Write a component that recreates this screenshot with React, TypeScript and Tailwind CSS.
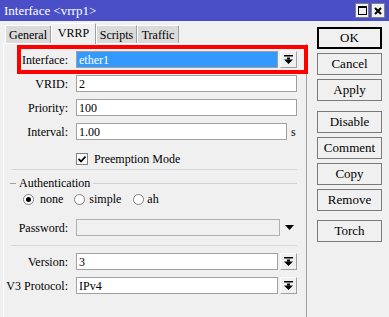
import React from "react";

const DropIcon = () => (
  <svg width="9" height="9" viewBox="0 0 9 9">
    <rect x="0" y="0" width="9" height="1.5" fill="#000" />
    <rect x="3" y="2.5" width="3" height="2" fill="#000" />
    <polygon points="0,4.5 9,4.5 4.5,9" fill="#000" />
  </svg>
);

const DropBtn = () => (
  <div className="w-[17px] h-[17px] ml-[2px] flex items-center justify-center border border-t-white border-l-white border-r-[#a0a0a0] border-b-[#a0a0a0] bg-[#f0f0f0] shrink-0">
    <DropIcon />
  </div>
);

const Field = ({ value, selected, className = "" }: { value: string; selected?: boolean; className?: string }) => (
  <div
    className={
      "h-[17px] border border-[#a0a0a0] flex items-center pl-[2px] text-[12px] leading-none " +
      (selected ? "bg-[#3399ff] text-white " : "bg-white text-black ") +
      className
    }
  >
    {value}
  </div>
);

const Label = ({ children }: { children: React.ReactNode }) => (
  <div className="w-[65px] text-right text-[12px] leading-none pr-[1px] shrink-0 whitespace-nowrap">{children}</div>
);

const Radio = ({ checked }: { checked?: boolean }) => (
  <div className="w-[11px] h-[11px] rounded-full border border-[#808080] bg-white flex items-center justify-center shrink-0">
    {checked && <div className="w-[5px] h-[5px] rounded-full bg-black" />}
  </div>
);

const Btn = ({ label, def, className = "" }: { label: string; def?: boolean; className?: string }) => (
  <div
    className={
      "w-[65px] h-[22px] flex items-center justify-center text-[13px] bg-[#f0f0f0] " +
      (def ? "border-2 border-black " : "border border-[#7a7a7a] ") +
      className
    }
  >
    {label}
  </div>
);

export default function App() {
  return (
    <div
      className="relative w-[389px] h-[317px] bg-[#f0f0f0] overflow-hidden text-black font-serif"
      style={{ fontFamily: "'Liberation Serif', 'Times New Roman', Times, serif" }}
    >
      {/* title bar */}
      <div className="h-[21px] bg-[#4b4fc7] flex items-center pl-[4px] pr-[4px]">
        <div className="text-white text-[13px] leading-none flex-1">Interface &lt;vrrp1&gt;</div>
        <div className="flex gap-[2px]">
          <div className="w-[14px] h-[15px] bg-[#f0f0f0] border border-[#808080] flex items-center justify-center">
            <div className="w-[9px] h-[9px] border border-black border-t-2" />
          </div>
          <div className="w-[14px] h-[15px] bg-[#f0f0f0] border border-[#808080] flex items-center justify-center">
            <svg width="8" height="8" viewBox="0 0 8 8">
              <path d="M1 1 L7 7 M7 1 L1 7" stroke="#000" strokeWidth="2" />
            </svg>
          </div>
        </div>
      </div>

      <div className="flex">
        {/* left */}
        <div className="w-[307px] pl-[3px] flex flex-col">
          {/* tabs */}
          <div className="h-[22px] flex items-end pl-[2px] text-[12px]">
            <div className="w-[46px] h-[18px] bg-[#dadada] border-t border-l border-white border-r border-r-[#a0a0a0] flex items-center justify-center">General</div>
            <div className="relative z-10 w-[45px] h-[21px] -mb-px bg-[#f0f0f0] border-t border-l border-white border-r border-r-[#a0a0a0] flex items-center justify-center pb-[2px]">VRRP</div>
            <div className="w-[41px] h-[18px] bg-[#dadada] border-t border-l border-white border-r border-r-[#a0a0a0] flex items-center justify-center">Scripts</div>
            <div className="w-[42px] h-[18px] bg-[#dadada] border-t border-l border-white border-r border-r-[#a0a0a0] flex items-center justify-center">Traffic</div>
          </div>
          {/* panel */}
          <div className="h-[274px] border-t border-l border-white border-r border-r-[#a0a0a0] flex flex-col">
            <div className="flex items-center mt-[7px]">
              <Label>Interface:</Label>
              <Field value="ether1" selected className="ml-[7px] w-[202px]" />
              <DropBtn />
            </div>
            <div className="flex items-center mt-[7px]">
              <Label>VRID:</Label>
              <Field value="2" className="ml-[7px] w-[221px]" />
            </div>
            <div className="flex items-center mt-[7px]">
              <Label>Priority:</Label>
              <Field value="100" className="ml-[7px] w-[221px]" />
            </div>
            <div className="flex items-center mt-[7px]">
              <Label>Interval:</Label>
              <Field value="1.00" className="ml-[7px] w-[211px]" />
              <div className="ml-[4px] text-[12px] leading-none">s</div>
            </div>
            <div className="flex items-center mt-[12px] h-[13px]">
              <div className="ml-[72px] w-[12px] h-[12px] border border-[#808080] bg-white flex items-center justify-center">
                <svg width="8" height="8" viewBox="0 0 8 8">
                  <path d="M0.5 4 L3 6.5 L7.5 1.5" stroke="#000" strokeWidth="1.8" fill="none" />
                </svg>
              </div>
              <div className="ml-[6px] text-[12px] leading-none">Preemption Mode</div>
            </div>
            <div className="mt-[4px] ml-[7px] w-[286px] h-px bg-[#d8d8d8]" />
            <div className="mt-[6px] h-[14px] flex items-center ml-[6px] w-[287px]">
              <div className="w-[6px] h-px bg-[#a0a0a0]" />
              <div className="mx-[3px] text-[12px] leading-none">Authentication</div>
              <div className="flex-1 h-px bg-[#d0d0d0]" />
            </div>
            <div className="mt-[3px] h-[12px] flex items-center text-[12px] leading-none">
              <div className="ml-[19px]"><Radio checked /></div>
              <div className="ml-[6px]">none</div>
              <div className="ml-[11px]"><Radio /></div>
              <div className="ml-[4px]">simple</div>
              <div className="ml-[12px]"><Radio /></div>
              <div className="ml-[3px]">ah</div>
            </div>
            <div className="flex items-center mt-[14px]">
              <Label>Password:</Label>
              <div className="ml-[7px] w-[204px] h-[17px] border border-[#b0b0b0] bg-[#f0f0f0]" />
              <div className="ml-[5px]">
                <svg width="9" height="5" viewBox="0 0 9 5">
                  <polygon points="0,0 9,0 4.5,5" fill="#000" />
                </svg>
              </div>
            </div>
            <div className="mt-[9px] ml-[7px] w-[286px] h-px bg-[#d8d8d8]" />
            <div className="flex items-center mt-[7px]">
              <Label>Version:</Label>
              <Field value="3" className="ml-[7px] w-[202px]" />
              <DropBtn />
            </div>
            <div className="flex items-center mt-[7px]">
              <Label>V3 Protocol:</Label>
              <Field value="IPv4" className="ml-[7px] w-[202px]" />
              <DropBtn />
            </div>
          </div>
        </div>

        {/* right buttons */}
        <div className="pl-[10px] pt-[6px] flex flex-col">
          <Btn label="OK" def />
          <Btn label="Cancel" className="mt-[4px]" />
          <Btn label="Apply" className="mt-[4px]" />
          <Btn label="Disable" className="mt-[10px]" />
          <Btn label="Comment" className="mt-[4px]" />
          <Btn label="Copy" className="mt-[4px]" />
          <Btn label="Remove" className="mt-[4px]" />
          <Btn label="Torch" className="mt-[9px]" />
        </div>
      </div>

      {/* red highlight annotation */}
      <div className="absolute left-[17px] top-[45px] w-[291px] h-[29px] border-4 border-[#ff0000]" />
    </div>
  );
}
